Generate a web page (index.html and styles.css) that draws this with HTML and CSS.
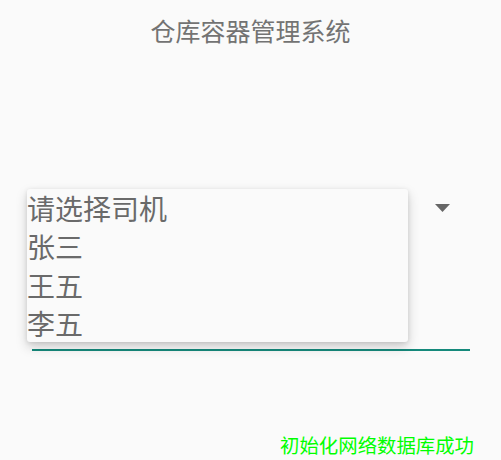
FILE: index.html
```html
<!DOCTYPE html>
<html lang="zh">
<head>
<meta charset="utf-8">
<link rel="stylesheet" href="styles.css">
</head>
<body>
<div class="screen">
  <h1 class="title">仓库容器管理系统</h1>
  <div class="spinner">
    <div class="field">
      <svg class="arrow" width="15" height="8" viewBox="0 0 15 8"><path d="M0 0 H15 L7.5 8 Z" fill="#666"/></svg>
    </div>
    <ul class="popup">
      <li>请选择司机</li>
      <li>张三</li>
      <li>王五</li>
      <li>李五</li>
    </ul>
  </div>
  <p class="status">初始化网络数据库成功</p>
</div>
</body>
</html>
```
FILE: styles.css
```css
html, body {
  margin: 0;
  padding: 0;
  background: #fafafa;
}
.screen {
  width: 501px;
  height: 460px;
  display: flex;
  flex-direction: column;
  font-family: "Noto Sans CJK SC", "Noto Sans", sans-serif;
  overflow: hidden;
}
.title {
  margin: 0;
  padding-top: 18px;
  font-size: 25px;
  line-height: 25px;
  font-weight: 400;
  color: #737373;
  text-align: center;
}
.spinner {
  position: relative;
  margin-top: 146px;
}
.field {
  margin-left: 32px;
  width: 438px;
  height: 160px;
  border-bottom: 2px solid #15897b;
  display: flex;
  justify-content: flex-end;
  align-items: flex-start;
  padding-top: 15px;
  box-sizing: content-box;
  height: 145px;
}
.arrow {
  display: block;
  margin-right: 20px;
}
.popup {
  position: absolute;
  left: 27px;
  top: 0;
  width: 381px;
  margin: 0;
  padding: 0;
  list-style: none;
  background: #fafafa;
  border-radius: 3px;
  box-shadow: 0 5px 12px rgba(0,0,0,0.18), 0 1px 4px rgba(0,0,0,0.10);
}
.popup li {
  height: 38.25px;
  line-height: 38.25px;
  font-size: 28px;
  color: #6a6a6a;
  padding-left: 0;
  white-space: nowrap;
}
.status {
  margin: 84px 0 0 0;
  padding-right: 27px;
  font-size: 19.4px;
  line-height: 20px;
  color: #00ff00;
  text-align: right;
}
```
